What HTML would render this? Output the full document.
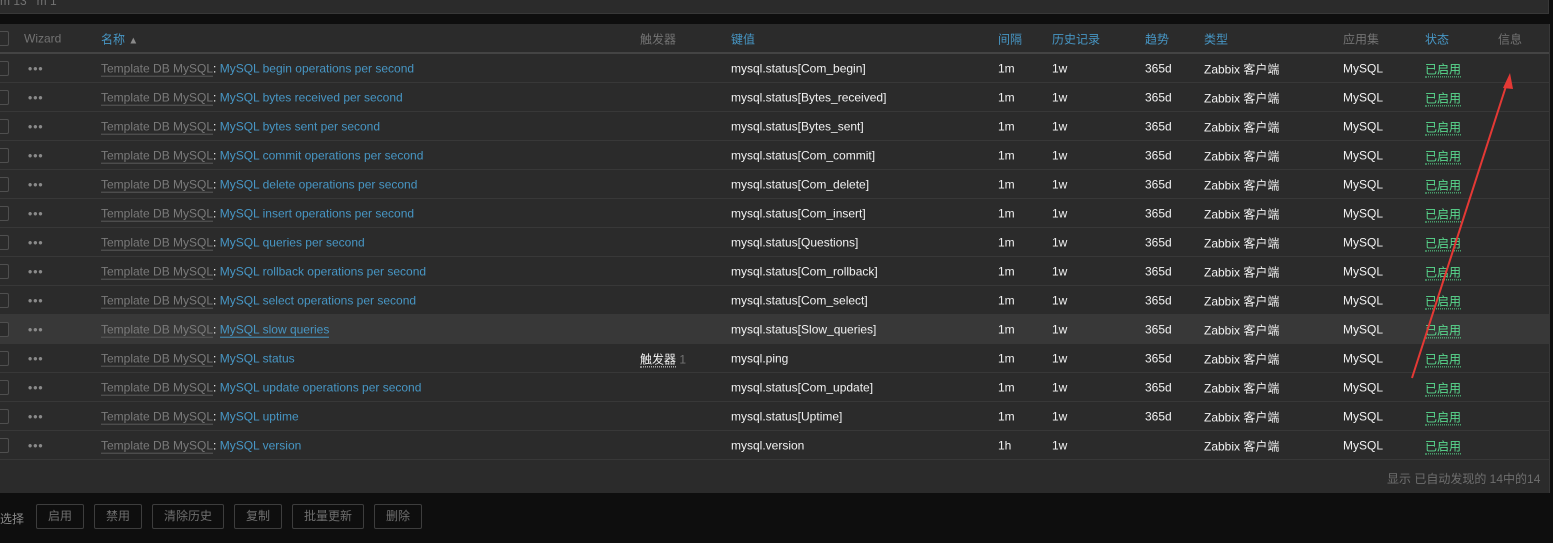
<!DOCTYPE html>
<html><head><meta charset="utf-8"><style>
*{margin:0;padding:0;box-sizing:border-box}
body{width:1553px;height:543px;background:#0e0e0e;font-family:"Liberation Sans","Noto Sans CJK SC",sans-serif;font-size:12px;color:#f2f2f2;position:relative;overflow:hidden}
.top{position:absolute;left:0;top:0;width:1549px;height:14px;background:#2b2b2b;border-right:1px solid #383838;border-bottom:1px solid #383838}
.panel{position:absolute;left:0;top:24px;width:1550px;height:469px;background:#2b2b2b;border-right:1px solid #383838}
.row{position:absolute;left:0;width:1549px;height:29px;border-bottom:1px solid #383838}
.row.hl{background:#383838}
.c{position:absolute;top:50%;transform:translateY(-45%);white-space:nowrap}
.cb{position:absolute;left:-6px;top:7px;width:15px;height:15px;border:1px solid #4f4f4f;border-radius:2px;background:#2b2b2b}
.dots{left:28px;color:#8a8a8a;font-size:12px;letter-spacing:1px;font-weight:bold}
.tpl{color:#7a7a7a;border-bottom:1px solid #5a5a5a}
.lnk{color:#4796c4}
.grn{color:#59db8f;border-bottom:1px dotted #59db8f}
.hd{color:#737373}
.hb{color:#4796c4}
.btn{position:absolute;top:504px;height:25px;border:1px solid #3d3d3d;border-radius:2px;color:#6e6e6e;text-align:center;line-height:23px;font-size:12px}
</style></head><body>
<div class="top"><span style="position:absolute;left:0;top:-6px;color:#737373;font-size:12px">m 13 &nbsp; m 1</span></div>
<div class="panel">
<div class="row" style="top:0;height:30px;border-bottom:2px solid #444">
<div class="cb"></div>
<span class="c hd" style="left:24px">Wizard</span>
<span class="c hb" style="left:101px">名称 <span style="color:#8a8a8a;font-size:10px">▲</span></span>
<span class="c hd" style="left:640px">触发器</span>
<span class="c hb" style="left:731px">键值</span>
<span class="c hb" style="left:998px">间隔</span>
<span class="c hb" style="left:1052px">历史记录</span>
<span class="c hb" style="left:1145px">趋势</span>
<span class="c hb" style="left:1204px">类型</span>
<span class="c hd" style="left:1343px">应用集</span>
<span class="c hb" style="left:1425px">状态</span>
<span class="c hd" style="left:1498px">信息</span>
</div>
</div>
<div id="rows"></div>
<span style="position:absolute;left:1387px;top:470px;color:#6e6e6e">显示 已自动发现的 14中的14</span>
<span style="position:absolute;left:0;top:510px;color:#8a8a8a">选择</span>
<div class="btn" style="left:36px;width:48px">启用</div>
<div class="btn" style="left:94px;width:48px">禁用</div>
<div class="btn" style="left:152px;width:72px">清除历史</div>
<div class="btn" style="left:234px;width:48px">复制</div>
<div class="btn" style="left:292px;width:72px">批量更新</div>
<div class="btn" style="left:374px;width:48px">删除</div>
<svg style="position:absolute;left:0;top:0" width="1553" height="543"><line x1="1412" y1="378" x2="1508" y2="80" stroke="#e53935" stroke-width="2"/><polygon points="1510,73 1503,88 1513,89" fill="#e53935"/></svg>
<script>
var d=[["begin operations per second","Com_begin"],["bytes received per second","Bytes_received"],["bytes sent per second","Bytes_sent"],["commit operations per second","Com_commit"],["delete operations per second","Com_delete"],["insert operations per second","Com_insert"],["queries per second","Questions"],["rollback operations per second","Com_rollback"],["select operations per second","Com_select"],["slow queries","Slow_queries"],["status",""],["update operations per second","Com_update"],["uptime","Uptime"],["version",""]];
var h="";
d.forEach(function(r,i){
var key=i==10?"mysql.ping":i==13?"mysql.version":"mysql.status["+r[1]+"]";
h+='<div class="row'+(i==9?' hl':'')+'" style="top:'+(54+29*i)+'px"><div class="cb"></div><span class="c dots">•••</span>'+
'<span class="c" style="left:101px"><span class="tpl">Template DB MySQL</span>: <span class="lnk"'+(i==9?' style="border-bottom:1px solid #4796c4"':'')+'>MySQL '+r[0]+'</span></span>'+
(i==10?'<span class="c" style="left:640px"><span style="border-bottom:1px dotted #f2f2f2">触发器</span> <span style="color:#737373">1</span></span>':'')+
'<span class="c" style="left:731px">'+key+'</span><span class="c" style="left:998px">'+(i==13?'1h':'1m')+'</span><span class="c" style="left:1052px">1w</span>'+
(i==13?'':'<span class="c" style="left:1145px">365d</span>')+
'<span class="c" style="left:1204px">Zabbix 客户端</span><span class="c" style="left:1343px">MySQL</span><span class="c" style="left:1425px"><span class="grn">已启用</span></span></div>';
});
document.getElementById("rows").innerHTML=h;
</script>
</body></html>
